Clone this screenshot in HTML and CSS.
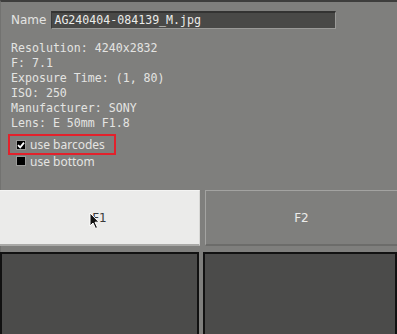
FILE: index.html
```html
<!DOCTYPE html>
<html lang="en">
<head>
  <meta charset="UTF-8" />
  <title>Image info</title>
  <link rel="stylesheet" href="styles.css">
</head>
<body>
  <div class="window">
    <div class="info">
      <div class="name-row">
        <span class="label">Name</span>
        <div class="name-field">AG240404-084139_M.jpg</div>
      </div>

      <div class="meta">
        <div>Resolution: 4240x2832</div>
        <div>F: 7.1</div>
        <div>Exposure Time: (1, 80)</div>
        <div>ISO: 250</div>
        <div>Manufacturer: SONY</div>
        <div>Lens: E 50mm F1.8</div>
      </div>

      <div class="options">
        <div class="option highlight">
          <span class="check checked">
            <svg width="8" height="8" viewBox="0 0 8 8"><path d="M1 4.2 L3.2 6.4 L7 1.6" fill="none" stroke="#fff" stroke-width="1.8"/></svg>
          </span>
          <span>use barcodes</span>
        </div>
        <div class="option">
          <span class="check"></span>
          <span>use bottom</span>
        </div>
      </div>
    </div>

    <div class="buttons">
      <div class="btn btn-active">
        F1
        <svg class="cursor" width="12" height="18" viewBox="0 0 12 18"><path d="M1 1 L1 14 L4 11 L6.5 16.5 L8.5 15.5 L6 10.2 L10 10.2 Z" fill="#111" stroke="#fff" stroke-width="1"/></svg>
      </div>
      <div class="btn">F2</div>
    </div>

    <div class="panels">
      <div class="panel"></div>
      <div class="panel"></div>
    </div>
  </div>
</body>
</html>
```

FILE: styles.css
```css
html, body {
  margin: 0;
  padding: 0;
}

body {
  width: 397px;
  height: 334px;
  overflow: hidden;
  background: #7f7f7d;
  font-family: 'DejaVu Sans', sans-serif;
  font-size: 12px;
  color: #e4e4e2;
}

.window {
  height: 334px;
  border-top: 2px solid #3e3e3d;
  border-left: 1px solid #727270;
  box-sizing: border-box;
  display: flex;
  flex-direction: column;
}

.info {
  padding: 9px 0 0 10px;
  height: 188px;
  box-sizing: border-box;
}

.name-row {
  display: flex;
  align-items: center;
  gap: 5px;
}

.name-field {
  width: 285px;
  height: 18px;
  box-sizing: border-box;
  background: #494947;
  border-top: 2px solid #333332;
  border-left: 1px solid #3a3a39;
  border-right: 1px solid #9a9a98;
  border-bottom: 1px solid #9a9a98;
  padding: 0 0 0 2px;
  font-family: 'DejaVu Sans Mono', monospace;
  font-size: 11.6px;
  line-height: 15px;
  color: #ececea;
}

.meta {
  margin-top: 12px;
  font-family: 'DejaVu Sans Mono', monospace;
  font-size: 11.6px;
  line-height: 15px;
}

.options {
  margin-top: 3px;
  font-family: 'Noto Sans', sans-serif;
  font-size: 12px;
}

.option {
  display: flex;
  align-items: center;
  gap: 4px;
  height: 10px;
  margin-top: 1px;
  padding-left: 5px;
  width: 100px;
}

.option.highlight {
  border: 2px solid #e3212b;
  margin-top: 0;
  margin-left: -3px;
  padding-left: 6px;
  width: 98px;
  height: 17px;
}

.check {
  width: 10px;
  height: 10px;
  flex: 0 0 10px;
  box-sizing: border-box;
  background: #000;
  border: 1px solid #9a9a98;
  display: flex;
  align-items: center;
  justify-content: center;
}

.buttons {
  display: flex;
  gap: 5px;
  height: 56px;
  margin-left: -1px;
}

.btn {
  position: relative;
  flex: 1;
  display: flex;
  align-items: center;
  justify-content: center;
  border-top: 1px solid #a3a3a1;
  border-left: 1px solid #a3a3a1;
  border-bottom: 2px solid #6c6c6a;
  box-sizing: border-box;
  font-size: 12px;
  color: #ececea;
}

.btn-active {
  flex: 0 0 200px;
  background: #ebebea;
  border-top: 1px solid #f4f4f3;
  border-left: none;
  border-right: 1px solid #d8d8d6;
  border-bottom: 2px solid #a9a9a7;
  color: #3a3a3a;
}

.cursor {
  position: absolute;
  left: 89px;
  top: 21px;
}

.panels {
  margin-top: 6px;
  flex: 1;
  display: flex;
  gap: 4px;
  margin-left: -1px;
}

.panel {
  flex: 1;
  background: #4b4b4a;
  border: 2px solid #111;
  border-bottom: none;
}

.panel:first-child {
  flex: 0 0 199px;
  box-sizing: border-box;
}
```
